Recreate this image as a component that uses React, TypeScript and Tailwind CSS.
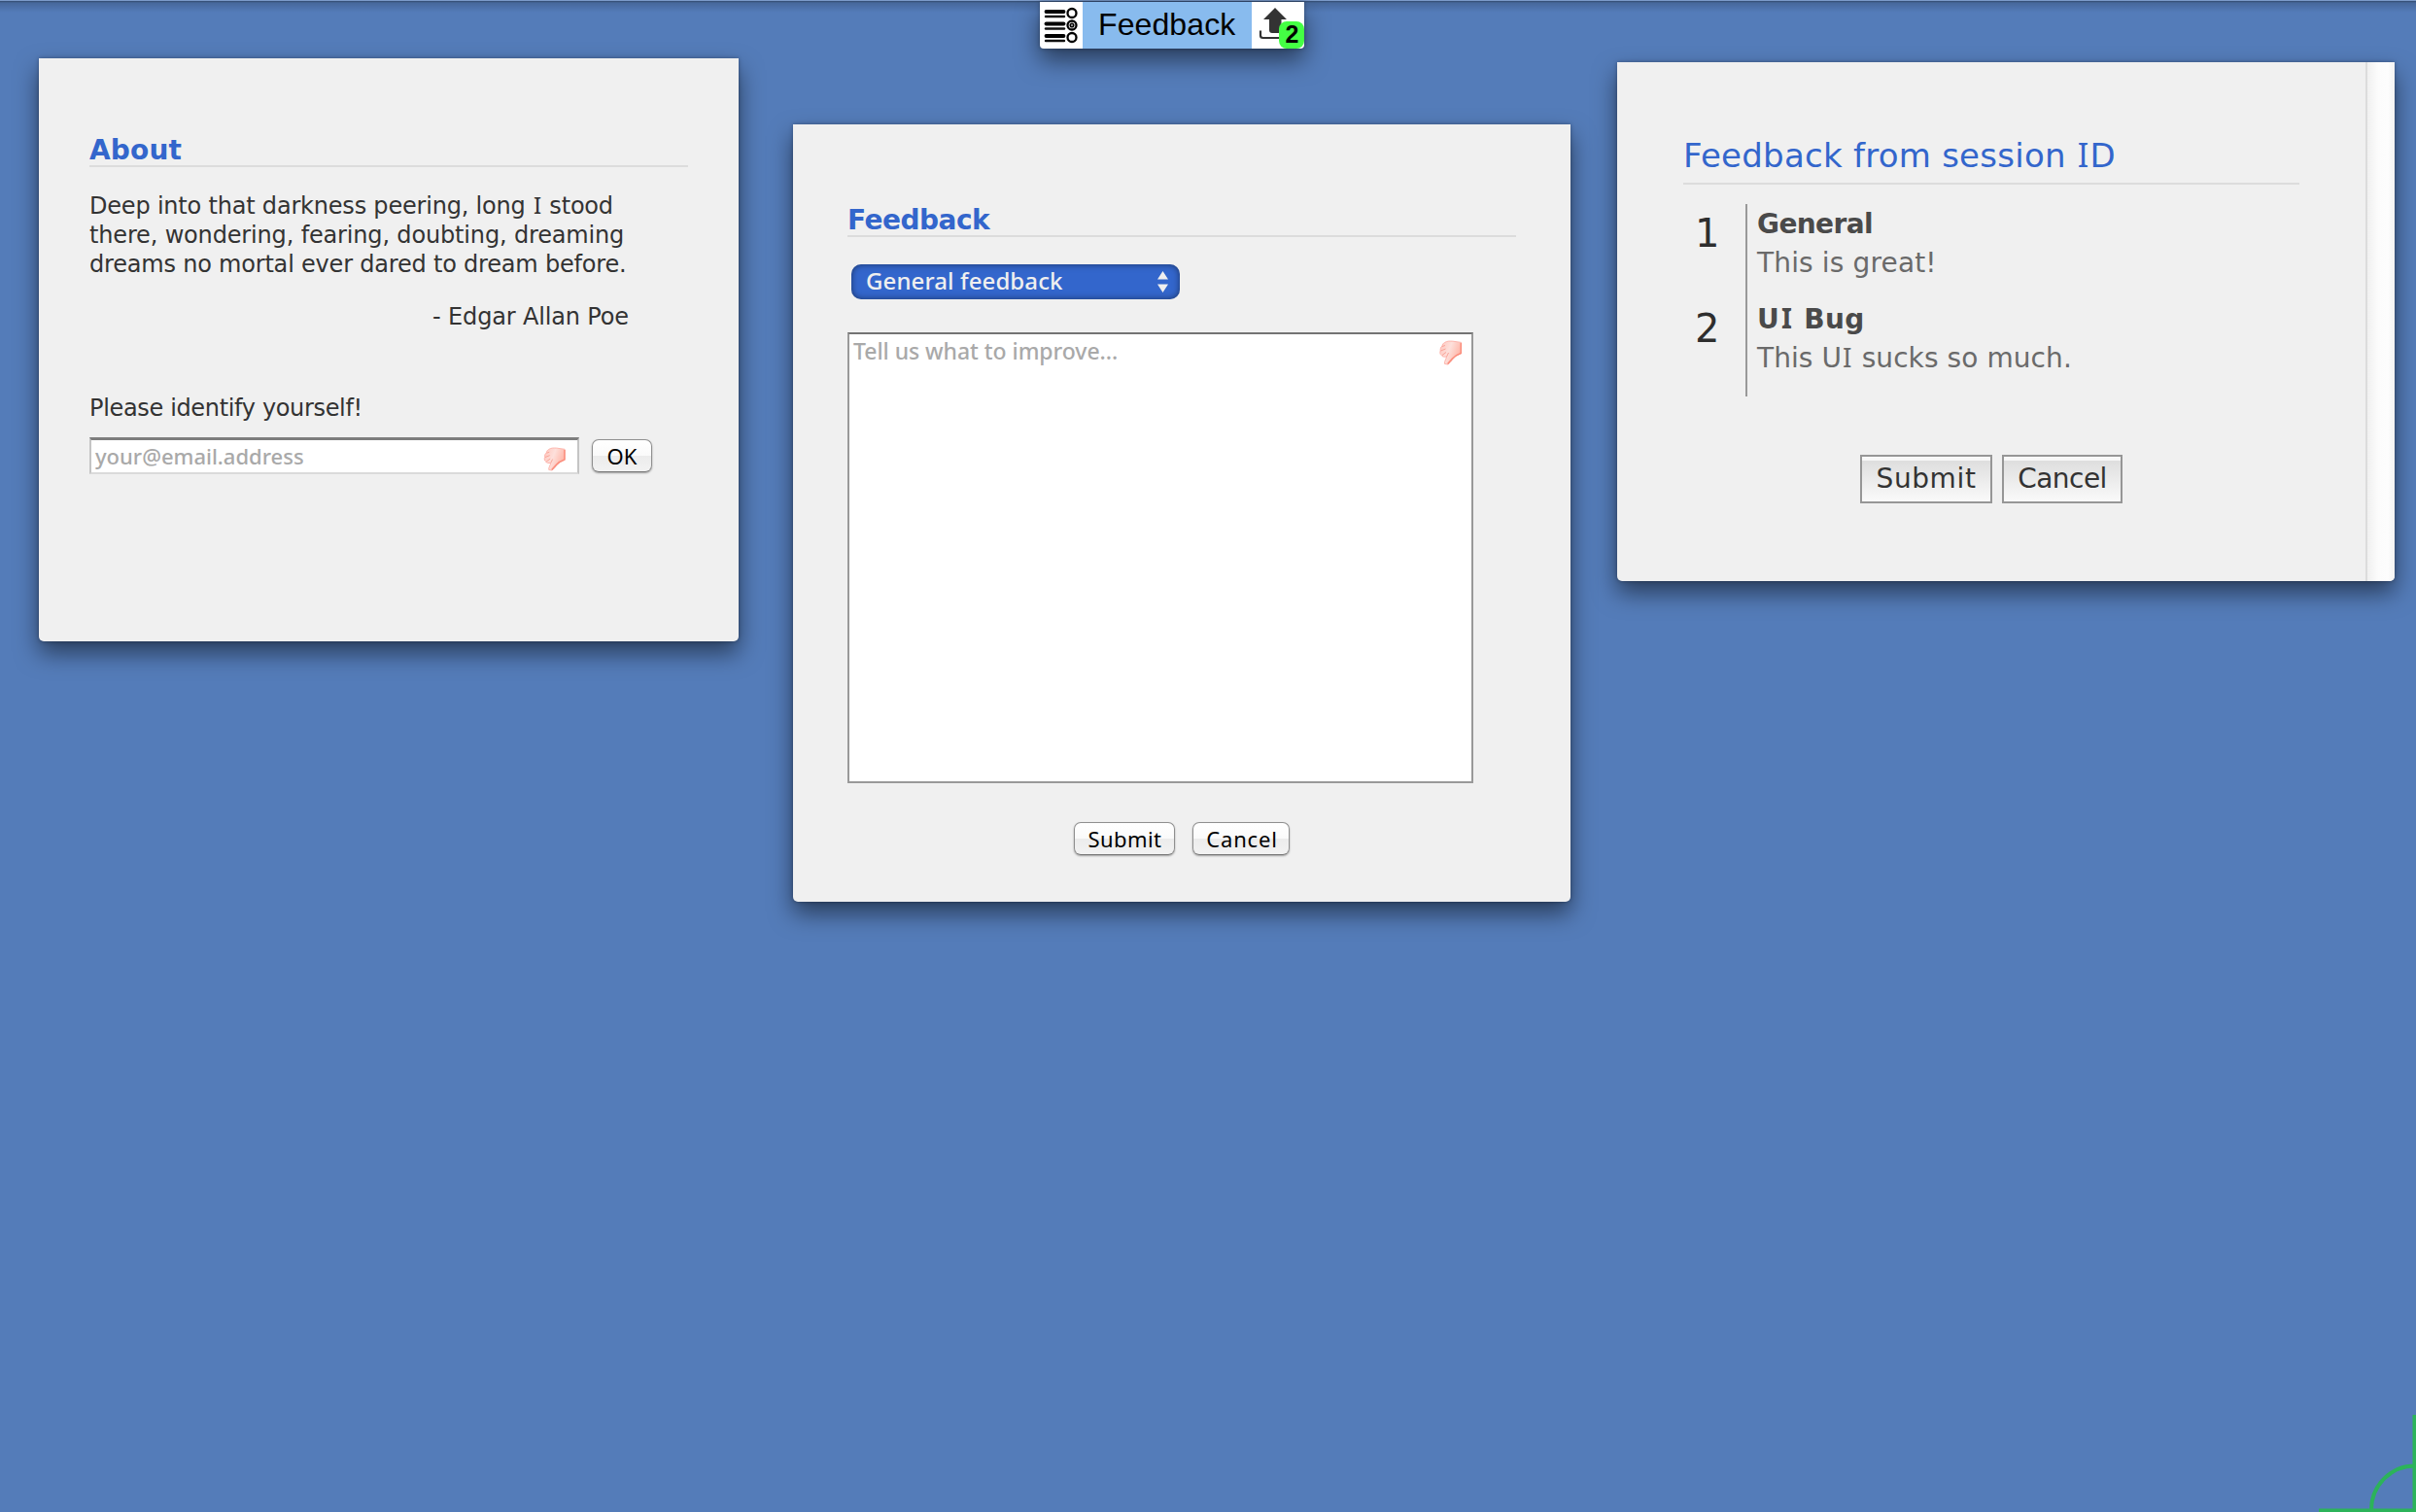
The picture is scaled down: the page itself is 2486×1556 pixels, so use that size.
import React from "react";

const verdana = "font-['Verdana','DejaVu_Sans',sans-serif]";
const lucida = "font-['Noto_Sans',sans-serif]";
const panel =
  "bg-[#f0f0f0] rounded-b-[5px] shadow-[0_12px_24px_rgba(0,0,0,0.5),0_0_4px_rgba(0,0,0,0.3)] shrink-0 overflow-hidden";

/* Capital I with serifs */
function I({ className = "px-px" }: { className?: string }) {
  return <span className={`font-['Noto_Sans',sans-serif] leading-none ${className}`}>I</span>;
}

function ThumbDown({ className }: { className: string }) {
  return (
    <svg viewBox="0 0 24 26" className={className}>
      <defs>
        <linearGradient id="hand" x1="0" y1="0" x2="1" y2="0.4">
          <stop offset="0" stopColor="#ffc4bb" />
          <stop offset="0.5" stopColor="#fde0db" />
          <stop offset="1" stopColor="#ffb6a8" />
        </linearGradient>
      </defs>
      <path
        d="M5.500 2.500 C8 .8 11 1 14 1.200 L22.500 2.400 L22.500 13.500 C19 15 16 17 14 19.500 C12.500 21 11 24 8.500 25 L5.500 24.400 C5 22 7 20 7.600 17 C5 17.500 3 17.200 2.200 15.500 C.6 14.500 .5 12.500 1.200 11 C1 9 1.500 7 3 6 C3.200 4.500 4 3.300 5.500 2.500Z"
        fill="url(#hand)"
        stroke="#fdb5ad"
        strokeWidth="1"
      />
      <path d="M22.300 3 L22.300 13.500 C18 15 15.500 16.800 13.500 19 L8.600 24.500" fill="none" stroke="#fb8d7c" strokeWidth="1.500" />
      <path d="M3 6.500 L6 5.500 M1.500 11 L6.500 9 M3 15.500 L7 12.500 M7.600 17 L9.500 13" fill="none" stroke="#f9a397" strokeWidth="1" />
    </svg>
  );
}

function ListIcon() {
  return (
    <svg viewBox="0 0 44 48" className="h-12 w-11">
      {[12, 24.5, 37].map((y) => (
        <g key={y}>
          <path d={`M6.500 ${y - 2}H24.500`} stroke="#000" strokeWidth="3.800" strokeLinecap="round" />
          <path d={`M6 ${y + 3}H25`} stroke="#111" strokeWidth="2.400" strokeLinecap="round" />
          <circle cx="33" cy={y - 0.5} r="4.500" fill="#fff" stroke="#000" strokeWidth="2.300" />
        </g>
      ))}
      <circle cx="33" cy="24" r="1.800" fill="#aaa" stroke="#000" strokeWidth="1.500" />
    </svg>
  );
}

function UploadIcon() {
  return (
    <svg viewBox="0 0 54 48" className="h-12 w-[54px]">
      <path d="M24 6 L36 18 H30.500 V29 Q30.500 32 27.500 32 H21 Q18 32 18 29 V18 H12Z" fill="#333" />
      <path d="M9 29.500 V34.500 Q9 37 11.500 37 H38" fill="none" stroke="#333" strokeWidth="2.200" />
    </svg>
  );
}

function AquaButton({ className, children }: { className: string; children: React.ReactNode }) {
  return (
    <button
      className={`h-[34px] rounded-[7px] border border-[#8f8f8f] border-b-[#777] bg-[linear-gradient(#fff_0%,#fafafa_50%,#ececec_51%,#f2f2f2_100%)] text-center text-[22px] leading-[33px] text-black shadow-[0_1px_2px_rgba(0,0,0,0.35)] ${lucida} ${className}`}
    >
      {children}
    </button>
  );
}

function FlatButton({ className, children }: { className: string; children: React.ReactNode }) {
  return (
    <button
      className={`h-[50px] border-2 border-[#969696] bg-[linear-gradient(#f8f8f8_0,#f8f8f8_4px,#dedede_4px,#fafafa_100%)] text-center text-[28px] leading-[46px] text-[#333] ${className}`}
    >
      {children}
    </button>
  );
}

function Entry({ n, title, body }: { n: number; title: React.ReactNode; body: React.ReactNode }) {
  return (
    <div className="flex h-[98px]">
      <div className="w-16 pl-[12px] text-[40px] leading-[60px] text-[#2e2e2e]">{n}</div>
      <div className="pt-px pl-[12px] text-[28px] leading-[40px]">
        <div className="h-10 font-bold text-[#4a4a4a]">{title}</div>
        <div className="h-10 text-[#6a6a6a]">{body}</div>
      </div>
    </div>
  );
}

export default function App() {
  return (
    <div className={`relative h-[1556px] w-[2486px] overflow-hidden bg-[#547cb9] whitespace-nowrap ${verdana}`}>
      <div className="h-px bg-[#7c9bca]" />
      <div className="h-3 bg-[linear-gradient(rgba(0,0,0,0.4)_0,rgba(0,0,0,0.16)_2px,transparent_100%)]" />

      <header className="absolute top-[2px] left-[1070px] flex h-12 w-[272px] rounded-b-[4px] bg-white shadow-[0_12px_24px_rgba(0,0,0,0.5),0_0_4px_rgba(0,0,0,0.3)]">
        <ListIcon />
        <div className="w-[174px] bg-[#88bbee] pl-[16px] font-['Liberation_Sans',Arial,sans-serif] text-[32px] leading-[46px] tracking-[0.1px] text-black">
          Feedback
        </div>
        <div className="relative">
          <UploadIcon />
          <span className="absolute right-0 bottom-0 h-7 w-[26px] rounded-[8px] bg-[#44ff44] pl-px text-center font-['Liberation_Sans',Arial,sans-serif] text-[25px] leading-[27px] font-bold text-black">
            2
          </span>
        </div>
      </header>

      <main className="flex items-start pt-[47px] pl-10">
        <section className={`h-[600px] w-[720px] px-[52px] pt-[78px] text-[24px] leading-[30px] text-[#333] ${panel}`}>
          <h2 className="h-[34px] border-b-2 border-[#dcdcdc] text-[28px] leading-[34px] font-bold tracking-[0.15px] text-[#3366cc]">
            About
          </h2>
          <p className="mt-[25px] h-[90px] tracking-[-0.16px]">
            <span className="tracking-[-0.2px]">
              Deep into that darkness peering, long <I /> stood
            </span>
            <br />
            there, wondering, fearing, doubting, dreaming
            <br />
            <span className="tracking-[-0.2px]">dreams no mortal ever dared to dream before.</span>
          </p>
          <p className="mt-6 pr-[61px] text-right tracking-[-0.15px]">- Edgar Allan Poe</p>
          <p className="mt-16 tracking-[-0.34px]">Please identify yourself!</p>
          <div className="mt-[15px] flex">
            <div
              className={`relative h-[38px] w-[504px] border-2 border-t-[3px] border-[#c4c4c4] border-t-[#7d7d7d] border-b-[#dadada] bg-white pl-1 text-[22px] leading-[33px] font-medium text-[#a9a9a9] ${lucida}`}
            >
              your@email.address
              <ThumbDown className="absolute top-[7px] left-[465px] h-[25px] w-[24px]" />
            </div>
            <AquaButton className="mt-[2px] ml-[13px] w-[62px]">OK</AquaButton>
          </div>
        </section>

        <section className={`mt-[68px] ml-14 h-[800px] w-[800px] px-14 pt-[82px] ${panel}`}>
          <h2 className="h-[34px] border-b-2 border-[#dcdcdc] text-[28px] leading-[33px] font-bold tracking-[-0.5px] text-[#3366cc]">
            Feedback
          </h2>
          <div
            className={`mt-7 ml-1 flex h-9 w-[338px] items-center justify-between rounded-[10px] bg-[#3366cc] pr-3 pl-[15px] text-[24px] leading-[34px] font-medium tracking-[0.1px] text-[#efefef] shadow-[inset_0_0_7px_rgba(0,0,0,0.5)] ${lucida}`}
          >
            <span className="-mt-[2px]">General feedback</span>
            <svg viewBox="0 0 11 22" className="h-[22px] w-[11px]">
              <path d="M5.500 0 L11 8.500 H0Z M0 13.500 H11 L5.500 22Z" fill="#efefef" />
            </svg>
          </div>
          <div
            className={`relative mt-[34px] h-[464px] w-[644px] border-2 border-[#999] border-t-[#737373] bg-white pl-1 text-[23px] leading-[35px] font-medium tracking-[-0.05px] text-[#a9a9a9] ${lucida}`}
          >
            Tell us what to improve...
            <ThumbDown className="absolute top-[6px] left-[607px] h-[26px] w-[24px]" />
          </div>
          <div className="mt-10 ml-[233px] flex gap-[18px]">
            <AquaButton className="w-[104px] pl-px tracking-[0.4px]">Submit</AquaButton>
            <AquaButton className="w-[100px] pl-[2px] tracking-[0.84px]">Cancel</AquaButton>
          </div>
        </section>

        <section className={`mt-1 ml-12 flex h-[534px] w-[800px] ${panel}`}>
          <div className="w-[770px] pt-[70px] pl-[68px]">
            <h2 className="h-14 w-[634px] border-b-2 border-[#dcdcdc] text-[34px] leading-[52px] tracking-[0.25px] text-[#3366cc]">
              Feedback from session <I />D
            </h2>
            <div className="relative mt-5 h-[198px]">
              <div className="absolute left-16 h-full w-[2px] bg-[#999]" />
              <Entry
                n={1}
                title={<span className="tracking-[-0.6px]">General</span>}
                body={<span className="tracking-[0.15px]">This is great!</span>}
              />
              <Entry
                n={2}
                title={
                  <span className="tracking-[0.3px]">
                    U<I className="px-[2px]" /> Bug
                  </span>
                }
                body={
                  <span className="tracking-[0.08px]">
                    This U<I /> sucks so much.
                  </span>
                }
              />
            </div>
            <div className="mt-[60px] ml-[182px] flex gap-[10px]">
              <FlatButton className="w-[136px] tracking-[0.6px]">Submit</FlatButton>
              <FlatButton className="w-[124px] tracking-[-0.52px]">Cancel</FlatButton>
            </div>
          </div>
          <div className="w-[30px] border-l-2 border-[#dcdcdc] bg-[linear-gradient(to_right,#f0f0f0,#fcfcfc_40%,#fdfdfd_75%,#f3f3f3)]" />
        </section>
      </main>

      <svg viewBox="0 0 100 100" className="absolute right-0 bottom-0 h-[100px] w-[100px]">
        <path d="M98.500 0V100 M0 98.500H100 M54 100 V97 A45 45 0 0 1 100 52.500" fill="none" stroke="#2cb35a" strokeWidth="4" />
      </svg>
    </div>
  );
}
